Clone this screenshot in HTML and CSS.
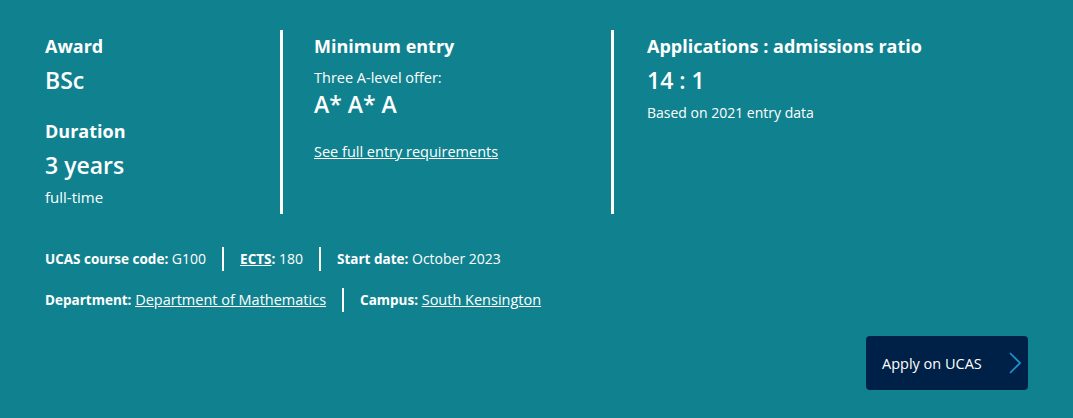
FILE: index.html
```html
<!DOCTYPE html>
<html lang="en">
  <head>
    <meta charset="UTF-8" />
    <meta name="viewport" content="width=device-width, initial-scale=1.0" />
    <title>BSc Mathematics - Course summary</title>
    <link rel="stylesheet" href="styles.css">
  </head>
  <body>
    <section class="course-summary">
      <div class="key-info">
        <div class="info-col award-col">
          <h3>Award</h3>
          <p class="big">BSc</p>
          <h3 class="gap-top">Duration</h3>
          <p class="big">3 years</p>
          <p class="small">full-time</p>
        </div>
        <div class="info-col entry-col">
          <h3>Minimum entry</h3>
          <p class="label">Three A-level offer:</p>
          <p class="big grade">A* A* A</p>
          <a class="link" href="#">See full entry requirements</a>
        </div>
        <div class="info-col ratio-col">
          <h3>Applications : admissions ratio</h3>
          <p class="big">14 : 1</p>
          <p class="small">Based on 2021 entry data</p>
        </div>
      </div>

      <ul class="meta">
        <li><b>UCAS course code:</b> G100</li>
        <li><b><a href="#">ECTS</a>:</b> 180</li>
        <li><b>Start date:</b> October 2023</li>
      </ul>
      <ul class="meta">
        <li><b>Department:</b> <a href="#">Department of Mathematics</a></li>
        <li><b>Campus:</b> <a href="#">South Kensington</a></li>
      </ul>

      <div class="apply">
        <a class="apply-btn" href="#">
          Apply on UCAS
          <svg width="12" height="22" viewBox="0 0 12 22" aria-hidden="true">
            <path d="M1 1 L11 11 L1 21" fill="none" stroke="#1e95d3" stroke-width="1.6" />
          </svg>
        </a>
      </div>
    </section>
  </body>
</html>
```

FILE: styles.css
```css
body {
  margin: 0;
  background-color: #10828f;
  font-family: "Open Sans", Arial, sans-serif;
  color: #fff;
}

.course-summary {
  padding: 30px 45px 29px 45px;
}

.key-info {
  display: flex;
}

.info-col {
  height: 184px;
}

.award-col {
  width: 235px;
}

.entry-col {
  width: 297px;
  border-left: 3px solid #fff;
  padding-left: 31px;
}

.ratio-col {
  flex: 1;
  border-left: 3px solid #fff;
  padding-left: 33px;
}

h3 {
  margin: 0;
  padding-top: 3px;
  font-size: 18px;
  line-height: 26px;
  font-weight: 700;
}

h3.gap-top {
  margin-top: 20px;
}

.big {
  margin: 6px 0 0 0;
  font-size: 23px;
  line-height: 30px;
  font-weight: 600;
}

.grade {
  margin-top: 1px;
}

.small {
  margin: 7px 0 0 0;
  font-size: 15px;
  line-height: 20px;
}

.ratio-col .small {
  margin-top: 8px;
  font-size: 14px;
}

.label {
  margin: 9px 0 0 0;
  font-size: 14.5px;
  line-height: 20px;
}

.link {
  display: inline-block;
  margin-top: 23px;
  font-size: 14.5px;
  line-height: 20px;
  color: #fff;
}

.meta {
  display: flex;
  list-style: none;
  margin: 33px 0 0 0;
  padding: 0;
  font-size: 14px;
}

.meta + .meta {
  margin-top: 17px;
}

.meta li {
  line-height: 23px;
  padding: 0 16px;
  border-left: 2px solid #fff;
}

.meta li:first-child {
  padding-left: 0;
  border-left: none;
}

.meta b {
  font-size: 13.5px;
}

.meta a {
  color: #fff;
  font-size: 14.5px;
}

.meta b a {
  font-size: 13.5px;
}

.apply {
  display: flex;
  justify-content: flex-end;
  margin-top: 24px;
}

.apply-btn {
  display: flex;
  align-items: center;
  justify-content: space-between;
  width: 139px;
  height: 54px;
  padding: 0 7px 0 16px;
  background-color: #002147;
  border-radius: 4px;
  color: #fff;
  font-size: 14.5px;
  text-decoration: none;
}
```
